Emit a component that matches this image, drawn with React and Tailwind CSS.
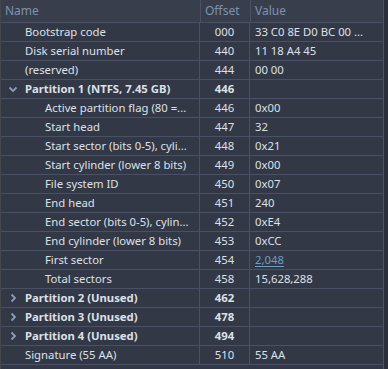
import React from "react";

const rows = [
  { name: "Bootstrap code", offset: "000", value: "33 C0 8E D0 BC 00 ...", level: 0 },
  { name: "Disk serial number", offset: "440", value: "11 18 A4 45", level: 0 },
  { name: "(reserved)", offset: "444", value: "00 00", level: 0 },
  { name: "Partition 1 (NTFS, 7.45 GB)", offset: "446", value: "", level: 0, group: "open" },
  { name: "Active partition flag (80 =...", offset: "446", value: "0x00", level: 1 },
  { name: "Start head", offset: "447", value: "32", level: 1 },
  { name: "Start sector (bits 0-5), cyli...", offset: "448", value: "0x21", level: 1 },
  { name: "Start cylinder (lower 8 bits)", offset: "449", value: "0x00", level: 1 },
  { name: "File system ID", offset: "450", value: "0x07", level: 1 },
  { name: "End head", offset: "451", value: "240", level: 1 },
  { name: "End sector (bits 0-5), cylin...", offset: "452", value: "0xE4", level: 1 },
  { name: "End cylinder (lower 8 bits)", offset: "453", value: "0xCC", level: 1 },
  { name: "First sector", offset: "454", value: "2,048", level: 1, link: true },
  { name: "Total sectors", offset: "458", value: "15,628,288", level: 1 },
  { name: "Partition 2 (Unused)", offset: "462", value: "", level: 0, group: "closed" },
  { name: "Partition 3 (Unused)", offset: "478", value: "", level: 0, group: "closed" },
  { name: "Partition 4 (Unused)", offset: "494", value: "", level: 0, group: "closed" },
  { name: "Signature (55 AA)", offset: "510", value: "55 AA", level: 0 },
];

function Chevron({ open }) {
  return (
    <svg width="10" height="10" viewBox="0 0 10 10" className="shrink-0">
      {open ? (
        <path d="M1.5 3.5 L5 7 L8.5 3.5" fill="none" stroke="#8a9cb8" strokeWidth="1.8" />
      ) : (
        <path d="M3.5 1.5 L7 5 L3.5 8.5" fill="none" stroke="#8a9cb8" strokeWidth="1.8" />
      )}
    </svg>
  );
}

export default function App() {
  return (
    <div
      className="w-[388px] h-[369px] bg-[#2b2f3b] overflow-hidden text-[11.3px] text-[#dde0e6]"
      style={{ fontFamily: '"Noto Sans", "Open Sans", sans-serif' }}
    >
      <div className="w-[384px] h-full bg-[#333847] border-l border-[#46474c] border-r border-r-[#4c5268]">
        {/* header */}
        <div className="flex h-[23px] bg-[#393e4c] border-b border-[#4b5165] text-[#7d93ae] leading-[22px] text-[12px]">
          <div className="w-[200px] pl-[4px] border-r border-[#4b5165]">Name</div>
          <div className="w-[50px] pl-[4px] border-r border-[#4b5165]">Offset</div>
          <div className="flex-1 pl-[4px]">Value</div>
        </div>

        {rows.map((r, i) => (
          <div key={i} className="flex h-[19px] border-b border-[#4b5165] leading-[18px]">
            <div
              className={`w-[199px] flex items-center whitespace-nowrap overflow-hidden border-r border-[#4b5165] ${
                r.level === 1 ? "pl-[44px]" : "pl-[24px]"
              } ${r.group ? "font-bold" : ""}`}
            >
              {r.group && (
                <span className="-ml-[17px] mr-[7px] flex items-center">
                  <Chevron open={r.group === "open"} />
                </span>
              )}
              {r.name}
            </div>
            <div
              className={`w-[50px] text-center border-r border-[#4b5165] ${r.group ? "font-bold" : ""}`}
            >
              {r.offset}
            </div>
            <div className="flex-1 pl-[5px] whitespace-nowrap overflow-hidden">
              {r.link ? (
                <span className="text-[#6a9ec2] underline underline-offset-2">{r.value}</span>
              ) : (
                r.value
              )}
            </div>
          </div>
        ))}
      </div>
    </div>
  );
}
